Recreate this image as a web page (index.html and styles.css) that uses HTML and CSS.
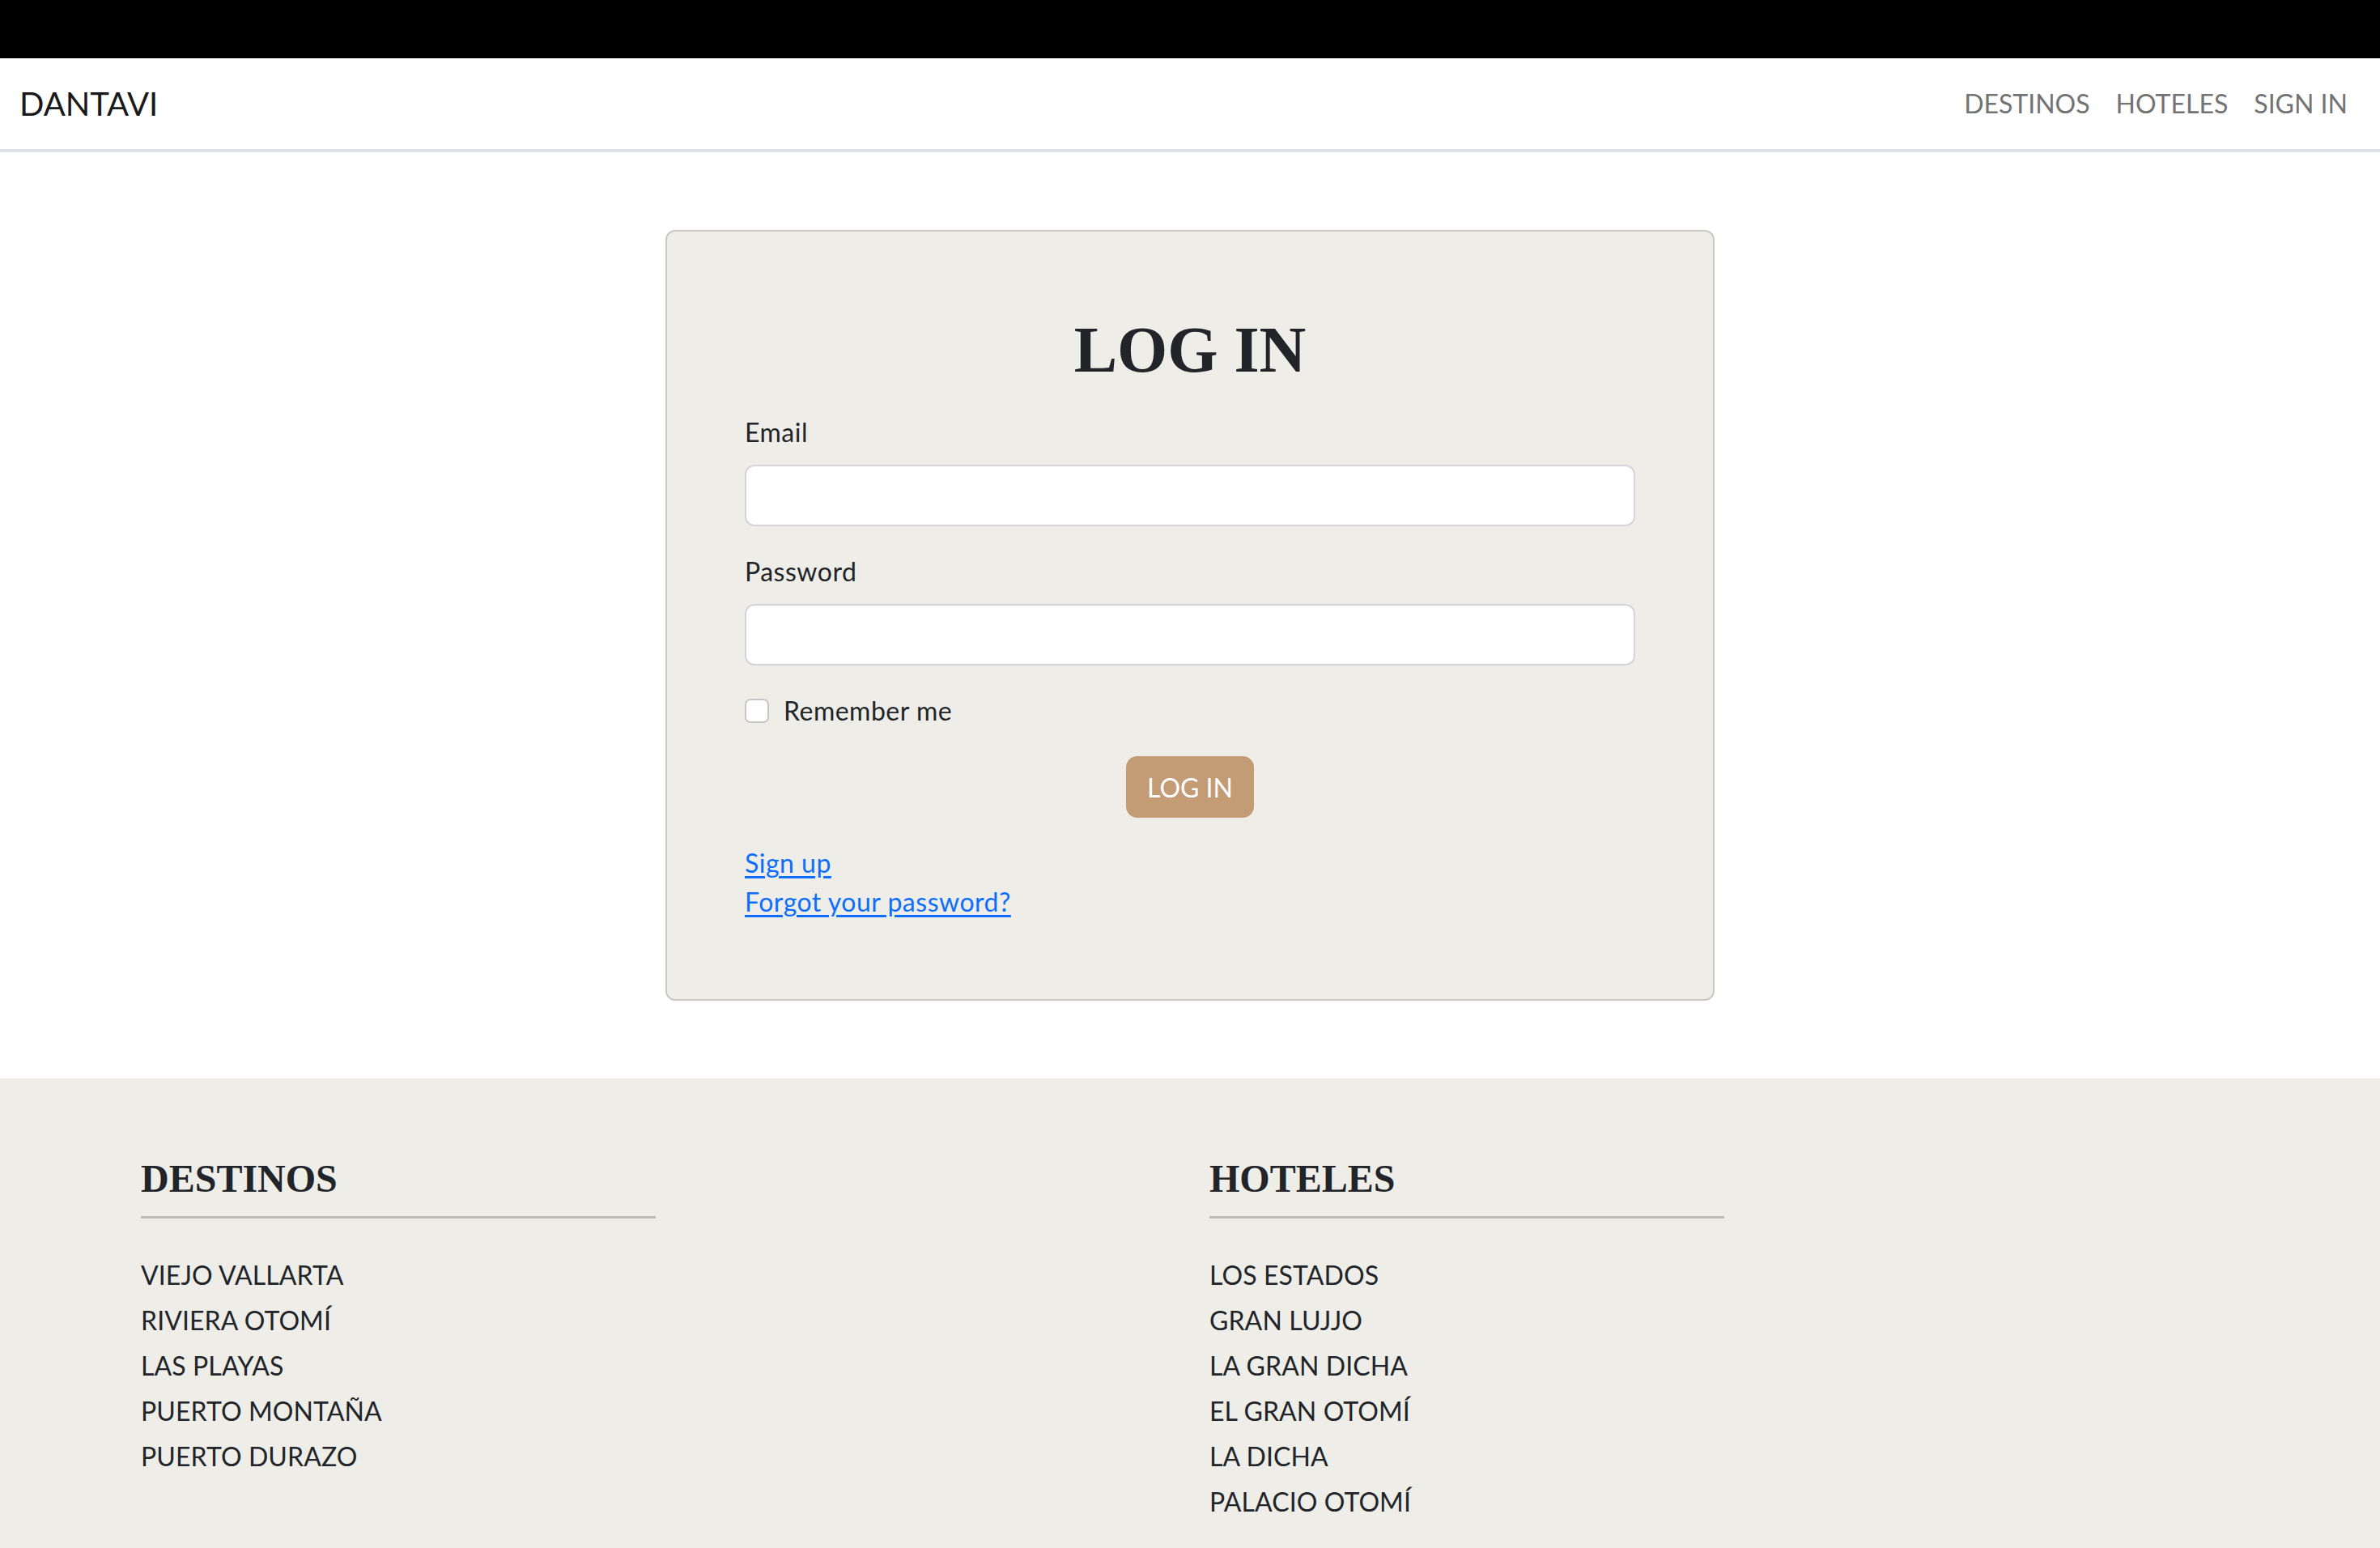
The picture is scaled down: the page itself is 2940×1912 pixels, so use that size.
FILE: index.html
```html
<!DOCTYPE html>
<html lang="es">
<head>
<meta charset="utf-8">
<title>DANTAVI - Log in</title>
<link rel="stylesheet" href="styles.css">
</head>
<body>
<div class="topbar"></div>
<nav class="navbar">
  <a class="brand" href="#">DANTAVI</a>
  <ul class="nav-links">
    <li><a href="#">DESTINOS</a></li>
    <li><a href="#">HOTELES</a></li>
    <li><a href="#">SIGN IN</a></li>
  </ul>
</nav>
<main class="main">
  <div class="card">
    <h1 class="card-title">LOG IN</h1>
    <form class="form">
      <div class="field">
        <label class="label" for="email">Email</label>
        <input class="input" id="email" type="email">
      </div>
      <div class="field">
        <label class="label" for="password">Password</label>
        <input class="input" id="password" type="password">
      </div>
      <div class="check">
        <span class="check-box"></span>
        <span class="check-label">Remember me</span>
      </div>
      <div class="actions">
        <button class="btn" type="button">LOG IN</button>
      </div>
    </form>
    <div class="links">
      <a href="#">Sign up</a>
      <a href="#">Forgot your password?</a>
    </div>
  </div>
</main>
<footer class="footer">
  <div class="footer-row">
    <div class="footer-col">
      <h3 class="footer-title">DESTINOS</h3>
      <hr class="footer-rule">
      <ul class="footer-list">
        <li>VIEJO VALLARTA</li>
        <li>RIVIERA OTOMÍ</li>
        <li>LAS PLAYAS</li>
        <li>PUERTO MONTAÑA</li>
        <li>PUERTO DURAZO</li>
      </ul>
    </div>
    <div class="footer-col">
      <h3 class="footer-title">HOTELES</h3>
      <hr class="footer-rule">
      <ul class="footer-list">
        <li>LOS ESTADOS</li>
        <li>GRAN LUJJO</li>
        <li>LA GRAN DICHA</li>
        <li>EL GRAN OTOMÍ</li>
        <li>LA DICHA</li>
        <li>PALACIO OTOMÍ</li>
      </ul>
    </div>
  </div>
</footer>
</body>
</html>
```
FILE: styles.css
```css
* { box-sizing: border-box; }
html, body { margin: 0; padding: 0; }
body {
  font-family: "Lato", "Noto Sans", sans-serif;
  font-size: 32px;
  line-height: 48px;
  letter-spacing: 0.5px;
  color: #212529;
  background: #ffffff;
}
.topbar { height: 72px; background: #000000; }

.navbar {
  height: 116px;
  padding: 0 24px;
  display: flex;
  align-items: center;
  justify-content: space-between;
  border-bottom: 4px solid #dee2e6;
  background: #ffffff;
}
.brand {
  font-size: 40px;
  line-height: 60px;
  letter-spacing: 0;
  color: #1a1a1a;
  text-decoration: none;
}
.nav-links {
  display: flex;
  list-style: none;
  margin: 0;
  padding: 0;
}
.nav-links a {
  display: block;
  padding: 0 16px;
  letter-spacing: 0;
  color: #737373;
  text-decoration: none;
}

.main { padding: 96px 0; }
.card {
  width: 1296px;
  margin: 0 auto;
  background: #eeede8;
  border: 2px solid #c9c8c3;
  border-radius: 12px;
  padding: 96px;
}
.card-title {
  margin: 0 0 28px;
  text-align: center;
  font-family: "Liberation Serif", "Times New Roman", serif;
  font-weight: 700;
  font-size: 80px;
  line-height: 100px;
  letter-spacing: 0;
  color: #212529;
}
.field { margin-bottom: 32px; }
.label { display: block; margin-bottom: 16px; }
.input {
  display: block;
  width: 100%;
  height: 76px;
  background: #ffffff;
  border: 2px solid #d3d5da;
  border-radius: 12px;
  font: inherit;
}
.check {
  display: flex;
  align-items: flex-start;
  margin-bottom: 32px;
}
.check-box {
  width: 30px;
  height: 30px;
  margin-top: 9px;
  margin-right: 18px;
  background: #ffffff;
  border: 2px solid #c6c6c6;
  border-radius: 7px;
}
.actions { display: flex; justify-content: center; margin-bottom: 32px; }
.btn {
  height: 76px;
  padding: 0 26px;
  background: #c39b74;
  color: #ffffff;
  border: 0;
  border-radius: 14px;
  font-family: inherit;
  font-size: 32px;
  letter-spacing: 0;
}
.links { display: flex; flex-direction: column; align-items: flex-start; }
.links a { color: #0d6efd; text-decoration: underline; text-underline-offset: 4px; }

.footer {
  background: #eeede8;
  padding: 94px 174px 96px;
}
.footer-row {
  display: grid;
  grid-template-columns: 1fr 1fr;
  column-gap: 48px;
}
.footer-title {
  margin: 0 0 16px;
  font-family: "Liberation Serif", "Times New Roman", serif;
  font-weight: 700;
  font-size: 48px;
  line-height: 60px;
  letter-spacing: 0;
  color: #212529;
}
.footer-rule {
  width: 50%;
  margin: 0 0 42px;
  border: 0;
  border-top: 3px solid #bdbcb8;
}
.footer-list {
  list-style: none;
  margin: 0;
  padding: 0;
  letter-spacing: 0.1px;
}
.footer-list li { line-height: 56px; }
```
